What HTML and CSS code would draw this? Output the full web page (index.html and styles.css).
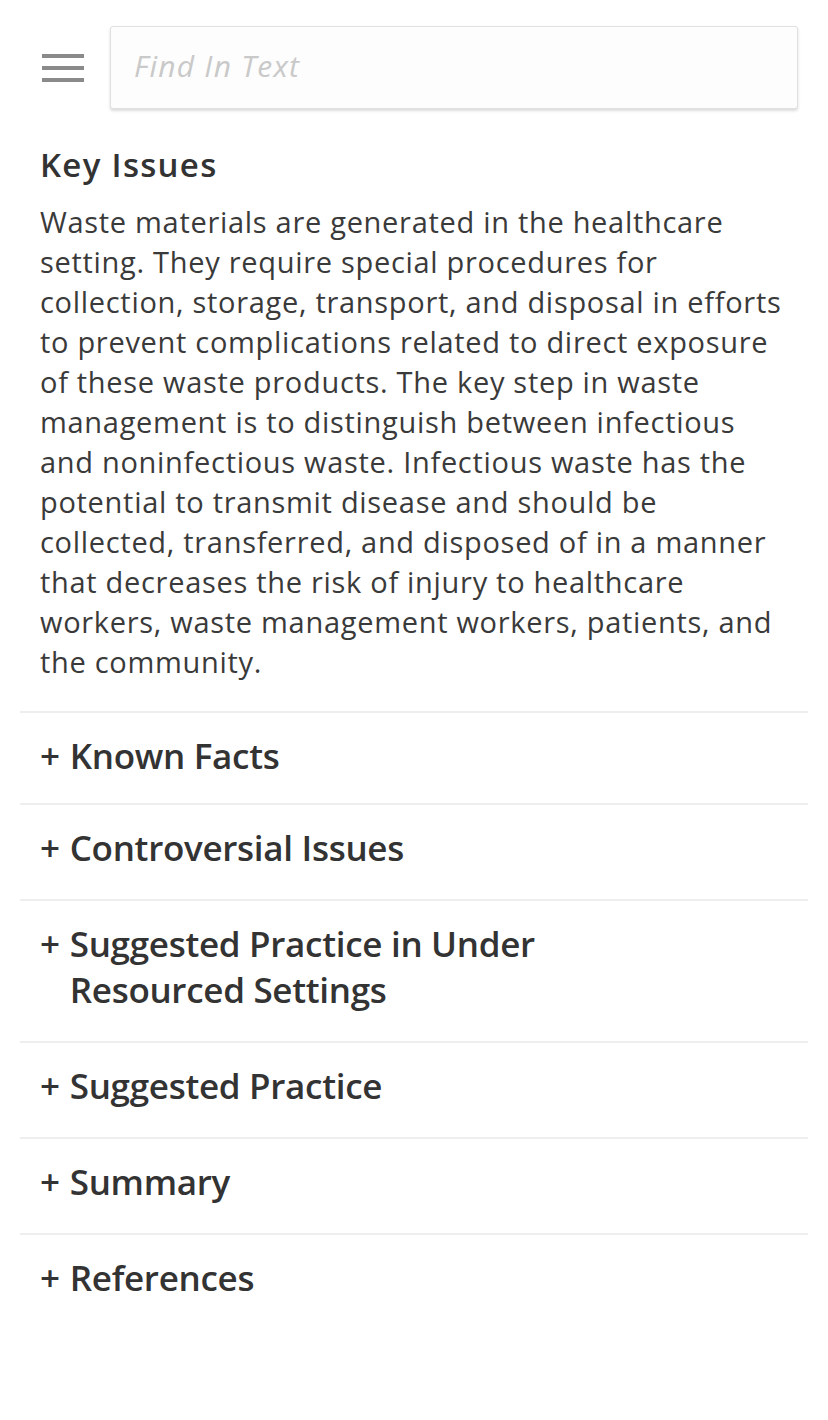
FILE: index.html
```html
<!DOCTYPE html>
<html lang="en">
<head>
<meta charset="utf-8">
<title>Key Issues</title>
<link rel="stylesheet" href="styles.css">
</head>
<body>
<header class="topbar">
  <button class="menu" aria-label="Menu">
    <span class="bar"></span><span class="bar"></span><span class="bar"></span>
  </button>
  <div class="search"><input class="search-input" type="text" placeholder="Find In Text"></div>
</header>
<main class="content">
  <section class="intro">
    <h2 class="intro-title">Key Issues</h2>
    <p class="intro-text">Waste materials are generated in the healthcare setting. They require special procedures for collection, storage, transport, and disposal in efforts to prevent complications related to direct exposure of these waste products. The key step in waste management is to distinguish between infectious and noninfectious waste. Infectious waste has the potential to transmit disease and should be collected, transferred, and disposed of in a manner that decreases the risk of injury to healthcare workers, waste management workers, patients, and the community.</p>
  </section>
  <ul class="sections">
    <li class="section"><span class="plus">+</span><span class="label">Known Facts</span></li>
    <li class="section"><span class="plus">+</span><span class="label">Controversial Issues</span></li>
    <li class="section"><span class="plus">+</span><span class="label">Suggested Practice in Under<br>Resourced Settings</span></li>
    <li class="section"><span class="plus">+</span><span class="label">Suggested Practice</span></li>
    <li class="section"><span class="plus">+</span><span class="label">Summary</span></li>
    <li class="section"><span class="plus">+</span><span class="label">References</span></li>
  </ul>
</main>
</body>
</html>
```
FILE: styles.css
```css
* { box-sizing: border-box; }
html, body { margin: 0; padding: 0; background: #fff; }
body {
  font-family: "Open Sans", "Noto Sans", sans-serif;
  color: #333;
}
.topbar {
  display: flex;
  align-items: center;
  padding: 26px 30px 0 42px;
  gap: 26px;
}
.menu {
  display: flex;
  flex-direction: column;
  gap: 8px;
  width: 42px;
  padding: 0;
  border: 0;
  background: none;
}
.bar {
  display: block;
  height: 4px;
  width: 42px;
  background: #8a8a8a;
}
.search {
  flex: 1;
  height: 83px;
  border: 1px solid #e0e0e0;
  border-radius: 3px;
  background: #fdfdfd;
  box-shadow: 0 2px 3px rgba(0,0,0,0.14);
  display: flex;
  align-items: center;
}
.search-input {
  width: 100%;
  border: 0;
  background: transparent;
  padding: 0 0 4px 23px;
  font-family: "Open Sans", "Noto Sans", sans-serif;
  font-size: 30px;
  letter-spacing: 1.2px;
  font-style: italic;
  color: #333;
  outline: none;
}
.search-input::placeholder { color: #c9c9c9; }
.content { padding: 0 20px; }
.intro {
  padding: 36px 20px 29px;
  border-bottom: 2px solid #eee;
}
.intro-title {
  margin: 0;
  font-size: 33px;
  font-weight: 600;
  letter-spacing: 1.3px;
  line-height: 40px;
  color: #333;
}
.intro-text {
  margin: 17px 0 0;
  font-size: 29px;
  letter-spacing: 0.7px;
  line-height: 40px;
  color: #3a3a3a;
}
.sections { list-style: none; margin: 0; padding: 0; }
.section {
  display: flex;
  gap: 10px;
  padding: 20px 20px 28px;
  border-bottom: 2px solid #eee;
  font-size: 35px;
  font-weight: 600;
  letter-spacing: -0.3px;
  line-height: 46px;
  color: #333;
}
.section:first-child { padding-bottom: 24px; }
.section:last-child { border-bottom: 0; }
```
